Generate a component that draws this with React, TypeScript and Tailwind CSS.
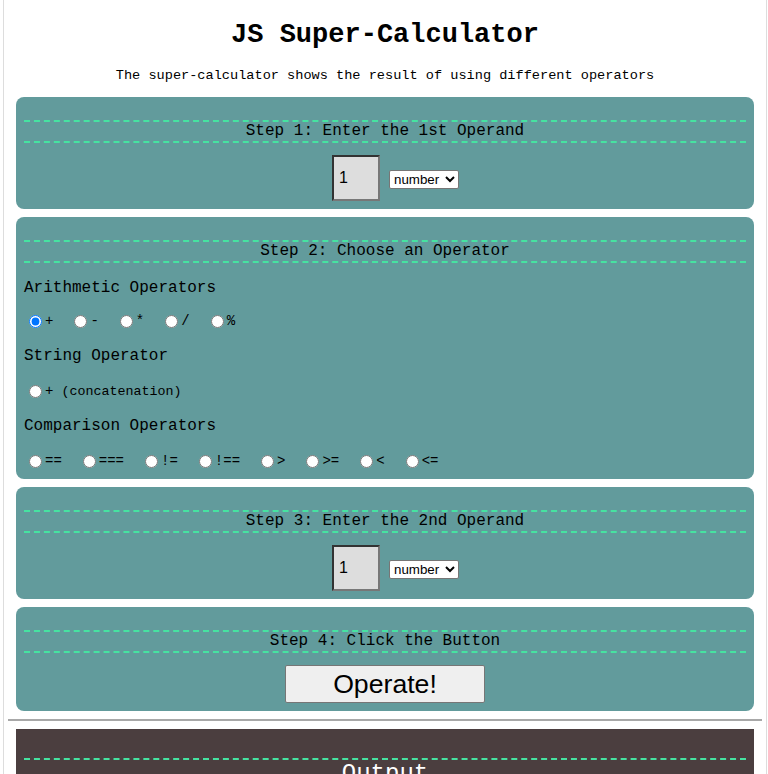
import { useState } from 'react';

const mono = "font-['Liberation_Mono','Courier_New',monospace]";
const sans = "font-['Liberation_Sans',Arial,sans-serif]";

const StepHeader = ({ title }: { title: string }) => (
  <div className="border-y-2 border-dashed border-[#46e3a1] text-center text-[16px] leading-[19px] text-black">
    {title}
  </div>
);

const OperandRow = () => (
  <div className="mt-[12px] flex items-center justify-center pl-[21px]">
    <input
      type="text"
      defaultValue="1"
      className={`${sans} h-[46px] w-[48px] border-2 border-t-[#333] border-l-[#333] border-b-[#777] border-r-[#777] bg-[#dddddd] pl-[5px] text-[16px] text-black outline-none`}
    />
    <select
      defaultValue="number"
      className={`${sans} ml-[9px] mt-[3px] h-[19px] w-[70px] rounded-[2px] border border-[#767676] bg-white text-[13.33px] text-black`}
    >
      <option value="number">number</option>
      <option value="string">string</option>
    </select>
  </div>
);

type RadioProps = { label: string; value: string; checked: string; onPick: (v: string) => void; extra?: string };

const RadioItem = ({ label, value, checked, onPick, extra }: RadioProps) => (
  <label className="mr-[16px] flex h-[17px] items-center">
    <input
      type="radio"
      name="op"
      checked={checked === value}
      onChange={() => onPick(value)}
      className="ml-[5px] mr-[3px] h-[13px] w-[13px]"
    />
    <span className="text-[14px] leading-[17px]">{label}</span>
    {extra && <span className="ml-[8px] text-[13.33px] leading-[17px]">{extra}</span>}
  </label>
);

const arithmetic = ['+', '-', '*', '/', '%'];
const comparison = ['==', '===', '!=', '!==', '>', '>=', '<', '<='];

export default function App() {
  const [op, setOp] = useState('a+');

  return (
    <div className={`${mono} ml-[3px] min-h-[774px] w-[764px] border-x border-[#dddddd] bg-white px-[4px] text-black`}>
      {/* ── HEADER ── */}
      <h1 className="pt-[20px] text-center text-[27px] font-bold leading-[30px]">JS Super-Calculator</h1>
      <p className="mt-[18px] text-center text-[13.6px] leading-[15px]">
        The super-calculator shows the result of using different operators
      </p>

      <div className="mx-[8px] mt-[14px] flex flex-col gap-[8px]">
        {/* Step 1 */}
        <section className="rounded-[8px] bg-[#629b9c] px-[8px] pb-[8px] pt-[23px]">
          <StepHeader title="Step 1: Enter the 1st Operand" />
          <OperandRow />
        </section>

        {/* Step 2 */}
        <section className="rounded-[8px] bg-[#629b9c] px-[8px] pb-[9px] pt-[23px]">
          <StepHeader title="Step 2: Choose an Operator" />
          <div className="mt-[16px] text-[16px] leading-[19px]">Arithmetic Operators</div>
          <div className="mt-[15px] flex">
            {arithmetic.map(a => (
              <RadioItem key={a} label={a} value={'a' + a} checked={op} onPick={setOp} />
            ))}
          </div>
          <div className="mt-[17px] text-[16px] leading-[19px]">String Operator</div>
          <div className="mt-[17px] flex">
            <RadioItem label="+" value="s+" checked={op} onPick={setOp} extra="(concatenation)" />
          </div>
          <div className="mt-[17px] text-[16px] leading-[19px]">Comparison Operators</div>
          <div className="mt-[17px] flex">
            {comparison.map(c => (
              <RadioItem key={c} label={c} value={'c' + c} checked={op} onPick={setOp} />
            ))}
          </div>
        </section>

        {/* Step 3 */}
        <section className="rounded-[8px] bg-[#629b9c] px-[8px] pb-[8px] pt-[23px]">
          <StepHeader title="Step 3: Enter the 2nd Operand" />
          <OperandRow />
        </section>

        {/* Step 4 */}
        <section className="rounded-[8px] bg-[#629b9c] px-[8px] pb-[8px] pt-[23px]">
          <StepHeader title="Step 4: Click the Button" />
          <div className="mt-[12px] flex justify-center">
            <button
              className={`${sans} h-[38px] w-[200px] rounded-[2px] border border-[#767676] bg-[#efefef] text-[26.67px] leading-none text-black`}
            >
              Operate!
            </button>
          </div>
        </section>
      </div>

      <hr className="mt-[8px] border-t-2 border-[#a8a8a8]" />

      {/* ── OUTPUT ── */}
      <section className="mx-[8px] mt-[8px] bg-[#4b3e3f] px-[8px] pb-[20px] pt-[29px] text-white">
        <div className="border-t-2 border-dashed border-[#46e3a1] text-center text-[24px] leading-[28px]">Output</div>
      </section>
    </div>
  );
}
